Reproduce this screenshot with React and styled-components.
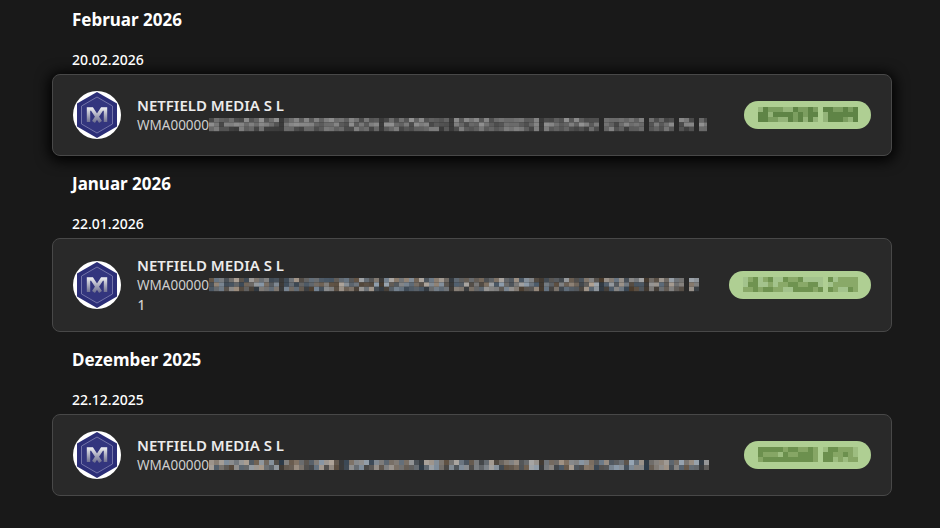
import React from "react";
import styled, { createGlobalStyle } from "styled-components";

const GlobalStyle = createGlobalStyle`
  html, body {
    margin: 0;
    padding: 0;
    background: #191919;
    font-family: "Noto Sans", "Open Sans", Arial, sans-serif;
  }
`;

const Page = styled.div`
  width: 940px;
  height: 528px;
  overflow: hidden;
  box-sizing: border-box;
  padding: 8px 48px 0 52px;
`;

const MonthHeading = styled.h2`
  margin: 0 0 0 20px;
  font-size: 17px;
  line-height: 24px;
  font-weight: 700;
  color: #fff;
`;

const Section = styled.section`
  margin-bottom: 16px;
`;

const DateLabel = styled.div`
  margin: 18px 0 4px 20px;
  font-size: 14px;
  line-height: 20px;
  font-weight: 500;
  color: #fff;
`;

const Card = styled.div`
  display: flex;
  align-items: center;
  gap: 16px;
  padding: 16px 20px;
  background: #292929;
  border: 1px solid #484848;
  border-radius: 8px;
  box-shadow: ${(p) => (p.$raised ? "0 2px 14px 3px #000" : "none")};
`;

const LogoWrap = styled.svg`
  width: 48px;
  height: 48px;
  flex: none;
`;

const Info = styled.div`
  flex: 1;
  min-width: 0;
`;

const Name = styled.div`
  font-size: 15px;
  line-height: 20px;
  font-weight: 600;
  color: #ececec;
`;

const Reference = styled.div`
  font-size: 13.5px;
  line-height: 20px;
  color: #cfcfcf;
`;

const RefLine = styled.div`
  display: flex;
  align-items: center;
`;

const ExtraLine = styled.div`
  font-weight: 500;
  padding-left: 0.4px;
`;

const Mosaic = styled.svg`
  display: block;
  flex: none;
`;

const Pill = styled.svg`
  display: block;
  flex: none;
`;

function Logo({ id }) {
  return (
    <LogoWrap viewBox="0 0 48 48">
      <defs>
        <linearGradient id={id} gradientUnits="userSpaceOnUse" x1="0" y1="16" x2="0" y2="32">
          <stop offset="0" stopColor="#f4f4f6" />
          <stop offset="1" stopColor="#67688a" />
        </linearGradient>
      </defs>
      <circle cx="24" cy="24" r="24" fill="#fff" />
      <polygon points="24,1 44,12.5 44,35.5 24,47 4,35.5 4,12.5" fill="#2c2e78" />
      <polygon points="24,6 39.5,15 39.5,33 24,42 8.5,33 8.5,15" fill="#33357e" stroke="#7374a8" strokeWidth="1" />
      <g fill="none" stroke={`url(#${id})`} strokeWidth="3.4">
        <polyline points="15.5,31 15.5,18 19,18 27.5,31" />
        <polyline points="32.5,31 32.5,18 29,18 20.5,31" />
      </g>
    </LogoWrap>
  );
}

// cheap deterministic noise so the pixelated parts stay the same on each run
function noise(seed, i, j) {
  const v = Math.sin(seed * 12.9898 + i * 78.233 + j * 37.719) * 43758.5453;
  return v - Math.floor(v);
}

function Pixelated({ width, gaps, dim, seed, tint, rows }) {
  const cell = 5;
  const rowHeight = rows === 3 ? 4.4 : 5;
  const cols = Math.ceil(width / cell);
  const cells = [];
  for (let i = 0; i < cols; i++) {
    const x = i * cell;
    if (gaps.includes(x)) continue;
    for (let j = 0; j < rows; j++) {
      const n = noise(seed, i, j);
      let base = Math.round(70 + n * (tint ? 95 : 75) - (j === 2 ? 14 : 0));
      if (dim.includes(x)) base = 58;
      const t = tint ? Math.round((noise(seed + 3, i, j) - 0.5) * 30) : 0;
      cells.push(
        <rect
          key={i + "-" + j}
          x={x}
          y={j * rowHeight}
          width={cell}
          height={rowHeight}
          fill={`rgb(${base + t},${base},${base - t})`}
        />
      );
    }
  }
  return (
    <Mosaic width={width} height={rows * rowHeight}>
      {cells}
    </Mosaic>
  );
}

function Amount({ width, seed, shades, gapAt }) {
  const cell = 5;
  const cells = [];
  const cols = Math.floor((width - 27) / cell);
  for (let i = 0; i < cols; i++) {
    if (i === gapAt) continue;
    for (let j = 0; j < 3; j++) {
      const n = noise(seed, i, j);
      const fill = n > 0.55 ? shades[0] : n > 0.18 ? shades[1] : shades[2];
      cells.push(
        <rect key={i + "-" + j} x={14 + i * cell} y={6 + j * 5} width={cell} height={5} fill={fill} />
      );
    }
  }
  return (
    <Pill width={width} height={28}>
      <rect width={width} height={28} rx={14} fill="#afcf93" />
      {cells}
    </Pill>
  );
}

const entries = [
  {
    month: "Februar 2026",
    date: "20.02.2026",
    raised: true,
    seed: 2,
    mosaic: 498,
    rows: 3,
    pill: 127,
    gapAt: 12,
    shades: ["#5f8446", "#7c9e60", "#94b479"],
    gaps: [390, 435, 465, 485],
    dim: [70, 170, 240, 330],
  },
  {
    month: "Januar 2026",
    date: "22.01.2026",
    seed: 7,
    mosaic: 490,
    rows: 3,
    pill: 142,
    gapAt: 16,
    tint: true,
    shades: ["#6f9350", "#89a968", "#a3c38c"],
    extra: "1",
    gaps: [475],
    dim: [70, 170, 240, 330, 390, 435],
  },
  {
    month: "Dezember 2025",
    date: "22.12.2025",
    seed: 11,
    mosaic: 500,
    rows: 2,
    pill: 127,
    gapAt: 12,
    tint: true,
    shades: ["#6c904e", "#86a665", "#9dbd80"],
    gaps: [],
    dim: [70, 130, 210, 330, 435, 490],
  },
];

export default function App() {
  return (
    <Page>
      <GlobalStyle />
      {entries.map((e) => (
        <Section key={e.month}>
          <MonthHeading>{e.month}</MonthHeading>
          <DateLabel>{e.date}</DateLabel>
          <Card $raised={e.raised}>
            <Logo id={"m" + e.seed} />
            <Info>
              <Name>NETFIELD MEDIA S L</Name>
              <Reference>
                <RefLine>
                  WMA00000
                  <Pixelated
                    width={e.mosaic}
                    gaps={e.gaps}
                    dim={e.dim}
                    seed={e.seed}
                    tint={e.tint}
                    rows={e.rows}
                  />
                </RefLine>
                {e.extra && <ExtraLine>{e.extra}</ExtraLine>}
              </Reference>
            </Info>
            <Amount width={e.pill} seed={e.seed} shades={e.shades} gapAt={e.gapAt} />
          </Card>
        </Section>
      ))}
    </Page>
  );
}
